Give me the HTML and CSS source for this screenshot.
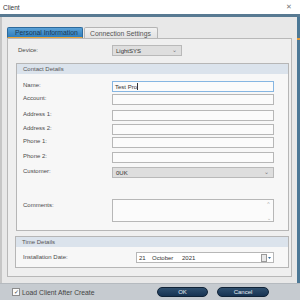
FILE: index.html
```html
<!DOCTYPE html>
<html>
<head>
<meta charset="utf-8">
<link rel="stylesheet" href="styles.css">
</head>
<body>
<div class="titlebar"><span class="title">Client</span><span class="close">✕</span></div>
<div class="accent"></div>
<div class="frame">
  <div class="main">
    <div class="tabs">
      <div class="tab active">Personal Information</div>
      <div class="tab">Connection Settings</div>
    </div>
    <div class="panel">
      <div class="device-row">
        <span class="label">Device:</span>
        <div class="select device"><span>LightSYS</span><span class="chev">⌄</span></div>
      </div>
      <div class="fieldset contact">
        <div class="legend">Contact Details</div>
        <div class="grid">
          <span class="label">Name:</span><div class="input focus">Test Pro<span class="caret"></span></div>
          <span class="label">Account:</span><div class="input"></div>
          <span class="label">Address 1:</span><div class="input"></div>
          <span class="label">Address 2:</span><div class="input"></div>
          <span class="label">Phone 1:</span><div class="input"></div>
          <span class="label">Phone 2:</span><div class="input"></div>
          <span class="label">Customer:</span><div class="select wide"><span>0UK</span><span class="chev">⌄</span></div>
          <span class="label lc">Comments:</span><div class="input textarea"><div class="scroll"><span>^</span><span>⌄</span></div></div>
        </div>
      </div>
      <div class="fieldset time">
        <div class="legend">Time Details</div>
        <div class="date-row">
          <span class="label">Installation Date:</span>
          <div class="input date"><span class="d">21</span><span class="m">October</span><span class="y">2021</span>
            <span class="cal"><svg width="10" height="8" viewBox="0 0 10 8"><rect x="0.5" y="0.5" width="5" height="7" fill="#e8e8e8" stroke="#9a9a9a"/><path d="M7 3 L10 3 L8.5 5 Z" fill="#3b6e9c"/></svg></span>
          </div>
        </div>
      </div>
    </div>
  </div>
  <div class="rstrip"></div>
</div>
<div class="bottombar">
  <label class="check"><span class="box">✓</span>Load Client After Create</label>
  <div class="buttons">
    <div class="btn">OK</div>
    <div class="btn">Cancel</div>
  </div>
</div>
</body>
</html>
```

FILE: styles.css
```css
html, body {
  margin: 0;
  padding: 0;
}
body {
  width: 300px;
  height: 300px;
  overflow: hidden;
  font-family: "Liberation Sans", Arial, sans-serif;
  font-size: 6px;
  color: #444;
  background: #e6e6e6;
}
.titlebar {
  height: 14px;
  background: #ffffff;
  display: flex;
  align-items: center;
  justify-content: space-between;
  padding: 0 8px 0 3px;
  font-size: 6.5px;
  color: #333;
}
.close {
  font-size: 7px;
  color: #777;
}
.accent {
  height: 3px;
  background: #587a92;
}
.frame {
  display: flex;
  height: 266px;
}
.main {
  flex: 1;
  background: #e8e8e8;
  border-left: 2px solid #c6c6c6;
  padding: 10px 0 0 5px;
}
.rstrip {
  width: 3px;
  background: linear-gradient(#4c7896 0, #4c7896 21px, #e49a3a 21px, #e49a3a 23px, #4c7896 23px);
}
.tabs {
  display: flex;
  height: 11px;
  gap: 1px;
}
.tab {
  width: 74px;
  box-sizing: border-box;
  border: 1px solid #b4b4b4;
  border-bottom: none;
  border-radius: 2px 2px 0 0;
  background: linear-gradient(#f2f2f2, #e2e2e2);
  font-size: 6.8px;
  color: #555;
  display: flex;
  align-items: center;
  padding-left: 5px;
  white-space: nowrap;
}
.tab.active {
  width: 76px;
  background: linear-gradient(#5aa2d8, #2f7dbb);
  border-color: #2c6a9c;
  border-bottom: 1px solid #e8a43c;
  color: #1b3a57;
  padding-left: 7px;
}
.panel {
  width: 285px;
  height: 239px;
  box-sizing: border-box;
  border: 1px solid #b8b8b8;
  background: #efefef;
  padding: 6px 2px 0 8px;
}
.device-row {
  display: flex;
  align-items: center;
  height: 11px;
  margin-left: 2px;
}
.device-row .label {
  width: 94px;
}
.select {
  box-sizing: border-box;
  height: 11px;
  border: 1px solid #b9b9b9;
  background: #dedede;
  display: flex;
  align-items: center;
  justify-content: space-between;
  padding: 0 4px 0 3px;
  color: #333;
}
.select.device {
  width: 70px;
}
.chev {
  font-size: 6px;
  color: #777;
  line-height: 1;
  margin-top: -2px;
}
.fieldset {
  box-sizing: border-box;
  border: 1px solid #b6b6b6;
  background: #f7f7f7;
}
.contact {
  margin-top: 7px;
  height: 168px;
}
.legend {
  height: 10px;
  background: #dbe3ec;
  padding-left: 6px;
  display: flex;
  align-items: center;
  color: #555;
}
.grid {
  display: grid;
  grid-template-columns: 89px 162px;
  grid-template-rows: 13px 16px 14px 13px 15px 15px 32px 23px;
  padding: 7px 0 0 6px;
}
.label {
  color: #4a4a4a;
  line-height: 9px;
  white-space: nowrap;
}
.grid .label {
  padding-top: 0;
}
.grid .lc {
  padding-top: 2px;
}
.input {
  box-sizing: border-box;
  height: 11px;
  border: 1px solid #b7b7b7;
  background: #fbfbfb;
  display: flex;
  align-items: center;
  padding-left: 2px;
  color: #333;
}
.input.focus {
  border-color: #86b6e2;
}
.caret {
  width: 1px;
  height: 7px;
  background: #333;
}
.select.wide {
  width: 162px;
}
.textarea {
  height: 23px;
  align-items: stretch;
  justify-content: flex-end;
  padding: 0;
}
.scroll {
  width: 9px;
  display: flex;
  flex-direction: column;
  justify-content: space-between;
  align-items: center;
  color: #aaa;
  font-size: 5px;
  padding: 2px 0 0;
  line-height: 5px;
}
.time {
  margin-top: 5px;
  height: 32px;
  margin-left: -1px;
}
.date-row {
  display: flex;
  align-items: center;
  padding: 5px 0 0 7px;
}
.date-row .label {
  width: 113px;
}
.date {
  width: 138px;
  background: #ffffff;
  padding-left: 2px;
  color: #333;
}
.date .d { width: 13px; }
.date .m { width: 30px; }
.date .y { flex: 1; }
.cal {
  display: flex;
  align-items: center;
  padding-right: 2px;
}
.bottombar {
  height: 17px;
  box-sizing: border-box;
  background: #c6cbd0;
  border-top: 1px solid #b5babf;
  display: flex;
  align-items: center;
  padding: 0 0 0 12px;
}
.check {
  display: flex;
  align-items: center;
  gap: 2px;
  color: #444;
  width: 145px;
  font-size: 6.8px;
  white-space: nowrap;
}
.box {
  width: 8px;
  height: 8px;
  box-sizing: border-box;
  border: 1px solid #8c8c8c;
  background: #fafafa;
  font-size: 6px;
  line-height: 6px;
  text-align: center;
  color: #444;
}
.buttons {
  display: flex;
  gap: 9px;
}
.btn {
  width: 51px;
  height: 10px;
  box-sizing: border-box;
  border-radius: 5px;
  background: linear-gradient(#2f4f6e, #173352);
  border: 1px solid #0f2236;
  color: #e8eef4;
  display: flex;
  align-items: center;
  justify-content: center;
  font-size: 6px;
}
.btn + .btn {
  width: 52px;
}
```
